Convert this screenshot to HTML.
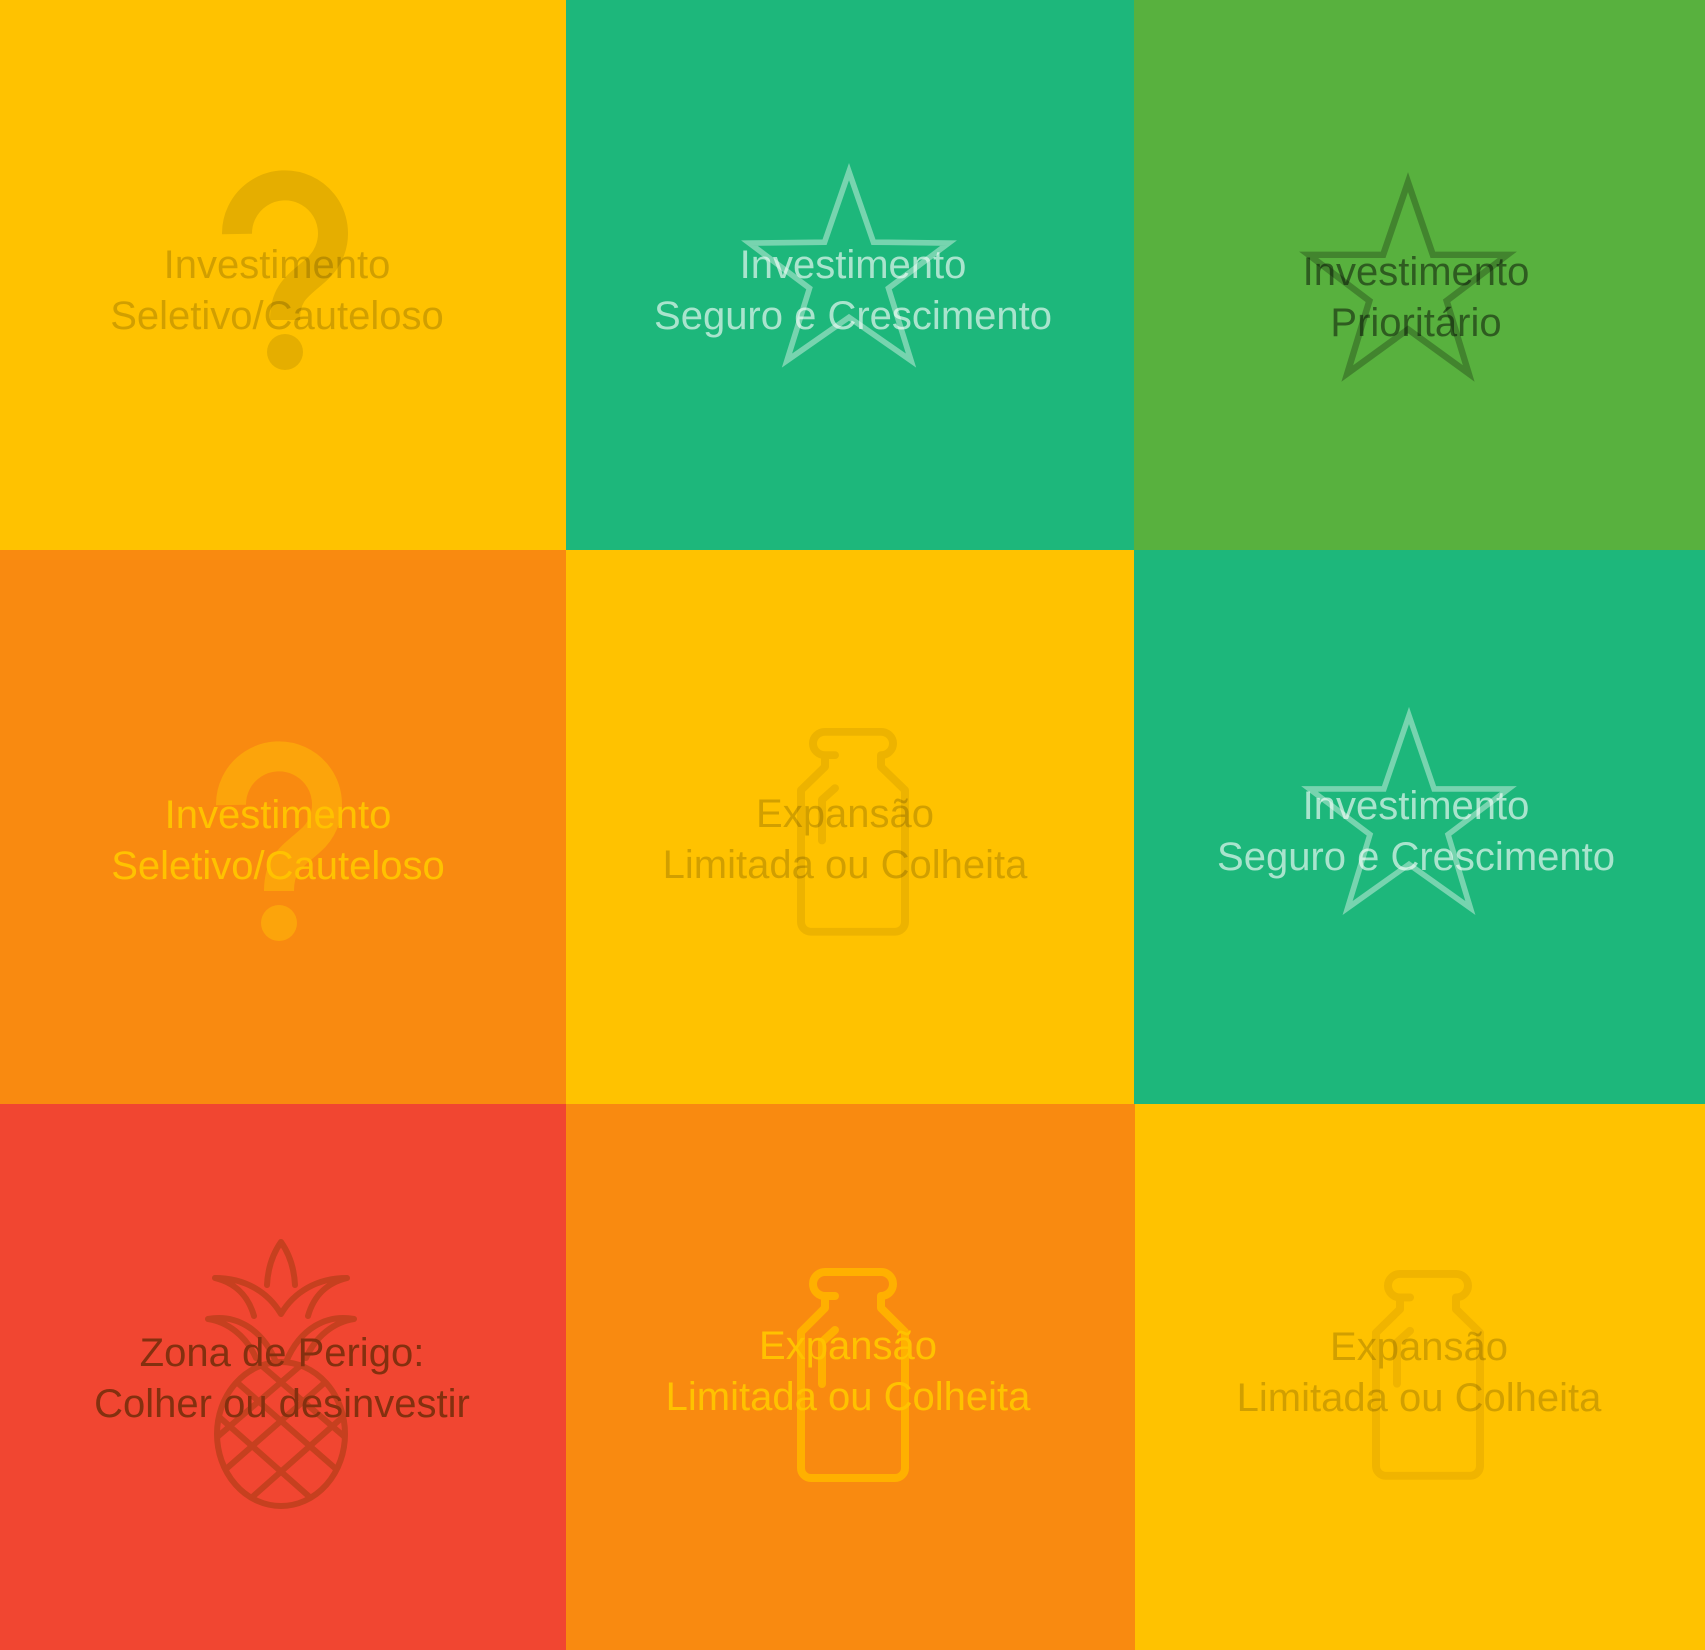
<!DOCTYPE html>
<html><head><meta charset="utf-8"><style>
html,body{margin:0;padding:0;}
body{width:1705px;height:1650px;position:relative;overflow:hidden;font-family:"Liberation Sans",sans-serif;}
.c{position:absolute;}
.t{position:absolute;transform:translateX(-50%);white-space:nowrap;text-align:center;font-size:40px;line-height:51px;}
svg{position:absolute;left:0;top:0;}
</style></head><body>
<div class="c" style="left:0;top:0;width:566px;height:550px;background:#FFC200"></div>
<div class="c" style="left:566px;top:0;width:568px;height:550px;background:#1DB77B"></div>
<div class="c" style="left:1134px;top:0;width:571px;height:550px;background:#58B13E"></div>
<div class="c" style="left:0;top:550px;width:566px;height:554px;background:#F98A10"></div>
<div class="c" style="left:566px;top:550px;width:568px;height:554px;background:#FFC200"></div>
<div class="c" style="left:1134px;top:550px;width:571px;height:554px;background:#1DB77B"></div>
<div class="c" style="left:0;top:1104px;width:566px;height:546px;background:#F14631"></div>
<div class="c" style="left:566px;top:1104px;width:569px;height:546px;background:#F98A10"></div>
<div class="c" style="left:1135px;top:1104px;width:570px;height:546px;background:#FFC200"></div>

<svg width="1705" height="1650" viewBox="0 0 1705 1650">
<defs>
<path id="q" d="M237,234 A48,48 0 1 1 316,270 C298,286 285,292 285,320" fill="none" stroke-width="30"/>
<path id="b" d="M38,28 H28 A12,12 0 0 1 28,4 H84 A12,12 0 0 1 84,28 V40 L108,64 V200 A10,10 0 0 1 98,210 H14 A10,10 0 0 1 4,200 V64 L28,40 V28 M25,116 V74 L38,62" fill="none" stroke-width="8" stroke-linejoin="round" stroke-linecap="round"/>
<clipPath id="el"><ellipse cx="281" cy="1434" rx="64" ry="72"/></clipPath>
</defs>
<g stroke="#E5AE00" fill="#E5AE00"><use href="#q"/><circle cx="285" cy="352" r="18" stroke="none"/></g>
<g stroke="#FCA40B" fill="#FCA40B" transform="translate(-6,571)"><use href="#q"/><circle cx="285" cy="352" r="18" stroke="none"/></g>
<g transform="translate(849,276) scale(0.94) translate(-849,-276)">
<polygon fill="none" stroke="rgba(255,255,255,0.4)" stroke-width="6" points="849,165 875,240 955,241 891,289 915,366 849,320 783,366 807,289 743,241 823,240"/></g>
<g transform="translate(1408,287) scale(0.92) translate(-1408,-287)">
<polygon fill="none" stroke="rgba(0,0,0,0.25)" stroke-width="7" points="1408,173 1435,252 1516,252 1450,302 1474,381 1408,333 1342,381 1366,302 1300,252 1381,252"/></g>
<g transform="translate(1409,815) scale(0.93) translate(-1409,-815)">
<polygon fill="none" stroke="rgba(255,255,255,0.4)" stroke-width="6" points="1409,708 1436,787 1516,787 1451,836 1475,915 1409,868 1343,915 1367,836 1302,787 1382,787"/></g>
<g stroke="#EDB300" transform="translate(797,728) scale(1,0.97)"><use href="#b"/></g>
<g stroke="#FFB000" transform="translate(797,1268)"><use href="#b"/></g>
<g stroke="#F0B400" transform="translate(1372,1270) scale(1,0.98)"><use href="#b"/></g>
<g fill="none" stroke="#C6401F" stroke-width="6" stroke-linecap="round" stroke-linejoin="round">
<path d="M267,1285 C268,1265 274,1252 281,1242 C288,1252 294,1265 295,1285"/>
<path d="M254,1316 C248,1295 235,1283 215,1278 C245,1278 268,1292 281,1314 C294,1292 317,1278 347,1278 C327,1283 314,1295 308,1316"/>
<path d="M208,1319 C235,1314 262,1328 276,1362 M208,1319 C228,1322 246,1336 256,1358 M354,1319 C327,1314 300,1328 286,1362 M354,1319 C334,1322 316,1336 306,1358"/>
<ellipse cx="281" cy="1434" rx="64" ry="72"/>
<g clip-path="url(#el)">
<path d="M200,1350 L360,1490 M200,1400 L330,1515 M220,1330 L360,1450 M362,1350 L202,1490 M362,1400 L232,1515 M342,1330 L202,1450"/>
</g>
</g>
</svg>

<div class="t" style="left:277px;top:240px;color:rgba(0,0,0,0.18)">Investimento<br>Seletivo/Cauteloso</div>
<div class="t" style="left:853px;top:240px;color:rgba(255,255,255,0.62)">Investimento<br>Seguro e Crescimento</div>
<div class="t" style="left:1416px;top:247px;color:rgba(0,0,0,0.48)">Investimento<br>Prioritário</div>
<div class="t" style="left:278px;top:790px;color:#FFC200">Investimento<br>Seletivo/Cauteloso</div>
<div class="t" style="left:845px;top:789px;color:rgba(0,0,0,0.18)">Expansão<br>Limitada ou Colheita</div>
<div class="t" style="left:1416px;top:781px;color:rgba(255,255,255,0.62)">Investimento<br>Seguro e Crescimento</div>
<div class="t" style="left:282px;top:1328px;color:#84300F">Zona de Perigo:<br>Colher ou desinvestir</div>
<div class="t" style="left:848px;top:1321px;color:#FFC200">Expansão<br>Limitada ou Colheita</div>
<div class="t" style="left:1419px;top:1322px;color:rgba(0,0,0,0.18)">Expansão<br>Limitada ou Colheita</div>
</body></html>
